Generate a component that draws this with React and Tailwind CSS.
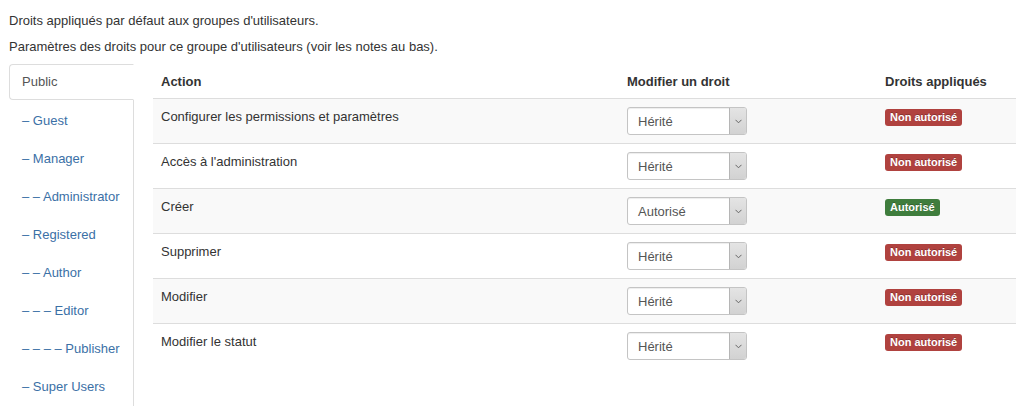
import React from 'react';

const groups = [
    'Public',
    '– Guest',
    '– Manager',
    '– – Administrator',
    '– Registered',
    '– – Author',
    '– – – Editor',
    '– – – – Publisher',
    '– Super Users',
];

const actions = [
    { label: 'Configurer les permissions et paramètres', value: 'Hérité', allowed: false },
    { label: "Accès à l'administration", value: 'Hérité', allowed: false },
    { label: 'Créer', value: 'Autorisé', allowed: true },
    { label: 'Supprimer', value: 'Hérité', allowed: false },
    { label: 'Modifier', value: 'Hérité', allowed: false },
    { label: 'Modifier le statut', value: 'Hérité', allowed: false },
];

function FakeSelect({ value }) {
    return (
        <div className="flex w-[120px] h-[28px] rounded-[3px] border border-[#c4c4c4] bg-white overflow-hidden shadow-[inset_0_1px_1px_rgba(0,0,0,0.075)]">
            <span className="flex-1 pl-[10px] pt-[1px] leading-[26px] text-[13px] text-[#555555]">{value}</span>
            <span className="flex w-[17px] items-center justify-center border-l border-[#b5b5b5] bg-gradient-to-b from-[#e4e4e4] to-[#d2d2d2]">
                <svg width="7" height="5" viewBox="0 0 7 5" fill="none">
                    <path d="M0.5 0.8 L3.5 3.8 L6.5 0.8" stroke="#666666" strokeWidth="1" />
                </svg>
            </span>
        </div>
    );
}

function Badge({ allowed }) {
    return (
        <span
            className={`inline-block rounded-[3px] px-[5px] pt-[2px] pb-[2px] text-[11px] leading-[13px] font-bold text-white [text-shadow:0_-1px_0_rgba(0,0,0,0.25)] ${
                allowed ? 'bg-[#3f7d3d]' : 'bg-[#b0423f]'
            }`}
        >
            {allowed ? 'Autorisé' : 'Non autorisé'}
        </span>
    );
}

export default function App() {
    return (
        <div className="min-h-[406px] bg-white pt-[12px] pl-[9px] font-['Liberation_Sans',Arial,sans-serif] text-[13px] leading-[18px] text-[#333333]">
            <p className="mb-[8px]">Droits appliqués par défaut aux groupes d'utilisateurs.</p>
            <p className="mb-[8px]">Paramètres des droits pour ce groupe d'utilisateurs (voir les notes au bas).</p>

            <div className="flex">
                {/* group tabs */}
                <ul className="w-[125px] shrink-0 border-r border-[#dddddd]">
                    {groups.map((g, i) => (
                        <li key={g} className="mb-[2px] -mr-px">
                            {i === 0 ? (
                                <a className="block h-[36px] rounded-l-[4px] border border-[#dddddd] border-r-white bg-white pl-[12px] pt-[7px] leading-[20px] text-[#555555]">
                                    {g}
                                </a>
                            ) : (
                                <a className="block h-[36px] border border-transparent pl-[12px] pt-[8px] leading-[20px] text-[#3b70a6]">
                                    {g}
                                </a>
                            )}
                        </li>
                    ))}
                </ul>

                {/* permissions table */}
                <div className="ml-[19px] flex-1">
                    <div className="flex h-[34px] items-center pt-[1px] font-bold">
                        <div className="w-[466px] px-[8px]">Action</div>
                        <div className="w-[258px] px-[8px]">Modifier un droit</div>
                        <div className="flex-1 px-[8px]">Droits appliqués</div>
                    </div>
                    {actions.map((a, i) => (
                        <div
                            key={a.label}
                            className={`flex h-[45px] border-t border-[#dddddd] ${i % 2 === 0 ? 'bg-[#f9f9f9]' : 'bg-white'}`}
                        >
                            <div className="w-[466px] px-[8px] pt-[9px]">{a.label}</div>
                            <div className="w-[258px] px-[8px] pt-[8px]">
                                <FakeSelect value={a.value} />
                            </div>
                            <div className="flex-1 px-[8px] pt-[9px]">
                                <Badge allowed={a.allowed} />
                            </div>
                        </div>
                    ))}
                </div>
            </div>
        </div>
    );
}
